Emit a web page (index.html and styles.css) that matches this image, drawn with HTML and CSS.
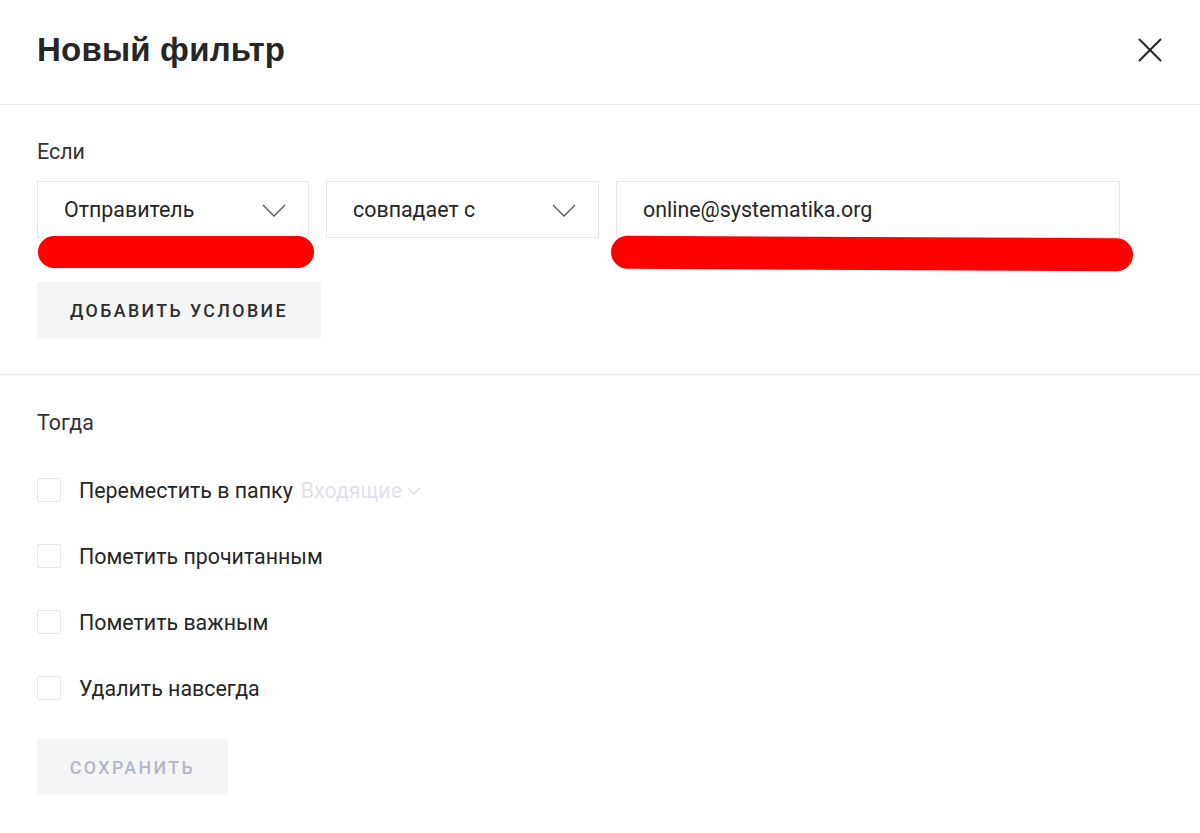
FILE: index.html
```html
<!DOCTYPE html>
<html lang="ru">
<head>
<meta charset="utf-8">
<title>Новый фильтр</title>
<link rel="stylesheet" href="styles.css">
</head>
<body>
<div class="dialog">
  <header class="head">
    <h1 class="title">Новый фильтр</h1>
    <button class="close" aria-label="Закрыть">
      <svg width="26" height="26" viewBox="0 0 26 26"><path d="M2 2L24 24M24 2L2 24" stroke="#222" stroke-width="2" fill="none"/></svg>
    </button>
  </header>
  <section class="sec sec-if">
    <div class="label">Если</div>
    <div class="fields">
      <div class="field sel w1"><span>Отправитель</span>
        <svg class="chev" width="24" height="13" viewBox="0 0 24 13"><path d="M1 1L12 12L23 1" stroke="#555" stroke-width="1.3" fill="none"/></svg>
      </div>
      <div class="field sel w2"><span>совпадает с</span>
        <svg class="chev" width="24" height="13" viewBox="0 0 24 13"><path d="M1 1L12 12L23 1" stroke="#555" stroke-width="1.3" fill="none"/></svg>
      </div>
      <div class="field w3"><span>online@systematika.org</span></div>
      <span class="mark m1"></span>
      <span class="mark m2"></span>
    </div>
    <button class="btn btn-add">ДОБАВИТЬ УСЛОВИЕ</button>
  </section>
  <section class="sec sec-then">
    <div class="label">Тогда</div>
    <div class="checks">
      <label class="row"><span class="box"></span><span class="txt">Переместить в папку</span><span class="folder">Входящие<svg width="14" height="8" viewBox="0 0 14 8"><path d="M1 1L7 7L13 1" stroke="#dfe2ea" stroke-width="1.6" fill="none"/></svg></span></label>
      <label class="row"><span class="box"></span><span class="txt">Пометить прочитанным</span></label>
      <label class="row"><span class="box"></span><span class="txt">Пометить важным</span></label>
      <label class="row"><span class="box"></span><span class="txt">Удалить навсегда</span></label>
    </div>
    <button class="btn btn-save">СОХРАНИТЬ</button>
  </section>
</div>
</body>
</html>
```

FILE: styles.css
```css
* { box-sizing: border-box; }
html, body { margin: 0; padding: 0; background: #fff; }
body { font-family: Roboto, "Noto Sans", sans-serif; color: #333; }
.dialog { width: 1200px; }
.head {
  height: 105px;
  border-bottom: 1px solid #ececec;
  display: flex;
  align-items: center;
  justify-content: space-between;
  padding: 0 37px 4px 37px;
}
.title {
  margin: 0;
  font-family: "Liberation Sans", Arial, sans-serif;
  font-weight: 700;
  font-size: 33px;
  color: #262626;
  letter-spacing: 0.2px;
}
.close {
  border: 0; background: none; padding: 0; margin: 0;
  width: 26px; height: 26px;
  display: flex;
}
.sec { padding: 35px 37px 35px 37px; }
.sec-if { border-bottom: 1px solid #ececec; }
.sec-then { padding-top: 36px; }
.label { font-size: 21.4px; line-height: 24px; color: #333; }
.sec-if .label { margin-bottom: 17px; }
.fields { position: relative; display: flex; gap: 17px; margin-bottom: 44px; }
.field {
  height: 57px;
  border: 1px solid #e6e6e6;
  display: flex;
  align-items: center;
  justify-content: space-between;
  padding: 0 22px 0 26px;
  font-size: 21.4px;
  color: #262626;
}
.w1 { width: 272px; }
.w2 { width: 273px; }
.w3 { width: 504px; }
.chev { margin-top: 2px; }
.mark {
  position: absolute;
  background: #ff0000;
  border-radius: 17px;
}
.m1 { left: 1px; top: 55px; width: 276px; height: 32px; }
.m2 { left: 574px; top: 56px; width: 522px; height: 33px; transform: rotate(0.3deg); }
.btn {
  display: block;
  border: 0;
  background: #f4f5f7;
  font-family: Roboto, sans-serif;
  font-weight: 500;
  font-size: 17.8px;
  letter-spacing: 2.4px;
  height: 57px;
  padding: 0 30px;
  margin: 0;
}
.btn-add { width: 284px; color: #2d2d2d; }
.btn-save { width: 191px; height: 56px; color: #b2b7c8; margin-top: 39px; }
.checks { margin-top: 43px; display: flex; flex-direction: column; gap: 42px; }
.row { display: flex; align-items: center; height: 24px; font-size: 21.4px; color: #262626; }
.box {
  width: 24px; height: 24px;
  border: 1px solid #e6e6e6;
  border-radius: 2px;
  margin-right: 18px;
  flex: none;
}
.folder { color: #dfe2ea; margin-left: 8px; display: inline-flex; align-items: center; gap: 5px; }
.folder svg { margin-top: 2px; }
```
